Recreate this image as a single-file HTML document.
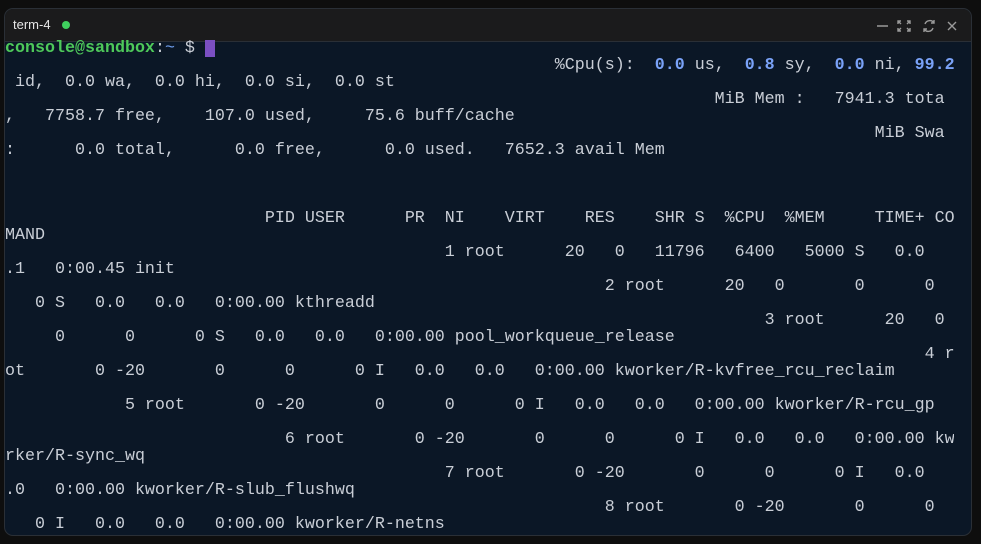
<!DOCTYPE html>
<html><head><meta charset="utf-8"><style>
html,body{margin:0;padding:0;background:#0e0e0e;width:981px;height:544px;overflow:hidden}
.win{position:absolute;left:4px;top:8px;width:968px;height:528px;border-radius:9px;background:#0b1726;overflow:hidden;border:1px solid #2a2f36;box-sizing:border-box}
.tb{position:absolute;left:0;top:0;right:0;height:32px;background:#1b1b1c;border-bottom:1px solid #2a2f36}
.tt{position:absolute;left:8px;top:8px;font:13px "Liberation Sans",sans-serif;color:#e6e6e6}
.dot{position:absolute;left:57px;top:12px;width:8px;height:8px;border-radius:50%;background:#3fcf5e}
.t{position:absolute;left:0;top:0;width:949px;height:528px;overflow:hidden}
.l{position:absolute;left:0;white-space:pre;font:16.67px/17px "Liberation Mono",monospace;color:#c9ced6}
.g{color:#4ec95a;font-weight:bold}.b{color:#7aa2f7;font-weight:bold}.tl{color:#6f9ff0}
.cur{display:inline-block;width:10px;height:17px;background:#7b4fc2;vertical-align:top}
</style></head><body>
<div class="win">
<div class="tb"><div class="tt">term-4</div><div class="dot"></div>
<svg style="position:absolute;left:866px;top:9px" width="90" height="16" viewBox="0 0 90 16" fill="none" stroke="#9a9a9a" stroke-width="1.4">
<path d="M6 8h11"/>
<path d="M30 3h-3v3M36 3h3v3M30 13h-3v-3M36 13h3v-3M27 3l3 3M39 3l-3 3M27 13l3-3M39 13l-3-3"/>
<path d="M63 5a5 5 0 0 0-9 1M53 11a5 5 0 0 0 9-1M63 2v3h-3M53 14v-3h3"/>
<path d="M77 4l8 8M85 4l-8 8"/>
</svg></div>
<div class="t">
<div class="l" style="top:31px"><span class="g">console@sandbox</span>:<span class="tl">~</span> $ <span class="cur"></span></div>
<div class="l" style="top:48px">                                                       %Cpu(s):  <span class="b">0.0</span> us,  <span class="b">0.8</span> sy,  <span class="b">0.0</span> ni, <span class="b">99.2</span></div>
<div class="l" style="top:65px"> id,  0.0 wa,  0.0 hi,  0.0 si,  0.0 st</div>
<div class="l" style="top:82px">                                                                       MiB Mem :   7941.3 tota</div>
<div class="l" style="top:99px">,   7758.7 free,    107.0 used,     75.6 buff/cache</div>
<div class="l" style="top:116px">                                                                                       MiB Swa</div>
<div class="l" style="top:133px">:      0.0 total,      0.0 free,      0.0 used.   7652.3 avail Mem</div>
<div class="l" style="top:201px">                          PID USER      PR  NI    VIRT    RES    SHR S  %CPU  %MEM     TIME+ COMMAND</div>
<div class="l" style="top:218px">MAND</div>
<div class="l" style="top:235px">                                            1 root      20   0   11796   6400   5000 S   0.0</div>
<div class="l" style="top:252px">.1   0:00.45 init</div>
<div class="l" style="top:269px">                                                            2 root      20   0       0      0</div>
<div class="l" style="top:286px">   0 S   0.0   0.0   0:00.00 kthreadd</div>
<div class="l" style="top:303px">                                                                            3 root      20   0</div>
<div class="l" style="top:320px">     0      0      0 S   0.0   0.0   0:00.00 pool_workqueue_release</div>
<div class="l" style="top:337px">                                                                                            4 root</div>
<div class="l" style="top:354px">ot       0 -20       0      0      0 I   0.0   0.0   0:00.00 kworker/R-kvfree_rcu_reclaim</div>
<div class="l" style="top:388px">            5 root       0 -20       0      0      0 I   0.0   0.0   0:00.00 kworker/R-rcu_gp</div>
<div class="l" style="top:422px">                            6 root       0 -20       0      0      0 I   0.0   0.0   0:00.00 kworker</div>
<div class="l" style="top:439px">rker/R-sync_wq</div>
<div class="l" style="top:456px">                                            7 root       0 -20       0      0      0 I   0.0</div>
<div class="l" style="top:473px">.0   0:00.00 kworker/R-slub_flushwq</div>
<div class="l" style="top:490px">                                                            8 root       0 -20       0      0</div>
<div class="l" style="top:507px">   0 I   0.0   0.0   0:00.00 kworker/R-netns</div>
</div></div>
</body></html>
